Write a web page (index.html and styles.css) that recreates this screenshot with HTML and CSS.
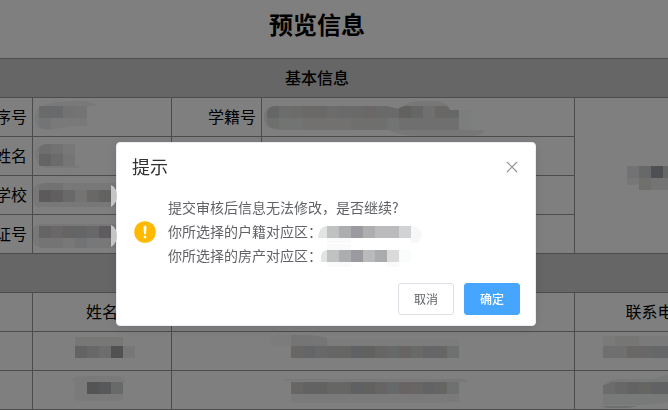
FILE: index.html
```
<!DOCTYPE html>
<html lang="zh-CN">
<head>
<meta charset="utf-8">
<title>预览信息</title>
<link rel="stylesheet" href="styles.css">
</head>
<body>
<main class="page">
  <h1 class="page-title">预览信息</h1>
  <table class="info">
    <colgroup>
      <col class="col-wide"><col class="col-wide"><col class="col-label"><col><col class="col-photo">
    </colgroup>
    <tbody>
      <tr><th class="section" colspan="5">基本信息</th></tr>
      <tr>
        <td class="label">序号</td>
        <td><svg class="mosaic" width="138" height="38" viewBox="33 98 138 38" aria-hidden="true">
          <path fill="#f2f2f2" d="M35 118q0-10 8-12q8-4 18-4q16-2 24-1q7 0 11 5h-9v20q-14-1-26 2q-16 4-22 0q-4-3-4-10z"/>
          <path fill="#d2d4d5" d="M39 106h12v12h-12z"/><path fill="#d1d5da" d="M51 106h12v12h-12z"/>
          <path fill="#e4e4e6" d="M63 106h12v12h-12z"/><path fill="#e9e8e9" d="M75 106h12v12h-12z"/>
          <path fill="#e6e8ea" d="M39 118h12v11h-6q-4 0-6-3z"/><path fill="#f3f3f3" d="M51 118h36v8q-20-1-36 3z"/>
        </svg></td>
        <td class="label">学籍号</td>
        <td><svg class="mosaic" width="312" height="38" viewBox="262 98 312 38" aria-hidden="true">
          <path fill="#efefef" d="M264 118q0-12 10-12h110l10 2h8q4-7 18-7q30-2 30 9h11v20h24q-3 6-15 6h-50q-20 0-32-6h-108q-16 0-16-12z"/>
          <path fill="#cdcdcc" d="M267 118v-6q2-6 8-6h4v12z"/><path fill="#d9dcdd" d="M279 106h12v12h-12z"/>
          <path fill="#dad9d7" d="M291 106h12v12h-12z"/><path fill="#d5d3d1" d="M303 106h24v12h-24z"/>
          <path fill="#d8d8da" d="M327 106h12v12h-12z"/><path fill="#d4d5d5" d="M339 106h24v12h-24z"/>
          <path fill="#d4cfcd" d="M363 106h12v12h-12z"/><path fill="#d4d4d4" d="M375 106h12l12 3v9h-24z"/>
          <path fill="#c6c2c1" d="M399 108l5-2h7v12h-12z"/><path fill="#cbcecc" d="M411 106h12v12h-12z"/>
          <path fill="#dededf" d="M423 106h12v12h-12z"/><path fill="#d4d1cf" d="M435 106h12v12h-12z"/>
          <path fill="#cdcfce" d="M447 106l3 4h9v8h-12z"/><path fill="#f8fcfa" d="M459 110h12v20h-12z"/>
          <path fill="#dedfdd" d="M267 118h12v11q-12 0-12-8z"/><path fill="#e4e6e7" d="M279 118h24v12h-24z"/>
          <path fill="#e5e3e0" d="M303 118h48v12h-48z"/><path fill="#dededc" d="M351 118h36v12h-36z"/>
          <path fill="#e4e9e8" d="M387 118h12v12h-12z"/><path fill="#dedfdf" d="M399 118h60v12h-60z"/>
        </svg></td>
        <td rowspan="4"><svg class="mosaic" width="120" height="155" viewBox="575 98 120 155" aria-hidden="true">
          <path fill="#e4e5e9" d="M627 166h12v12h-12z"/><path fill="#cdd2cf" d="M639 166h12v12h-12z"/>
          <path fill="#9da1a9" d="M651 166h12v12h-12z"/><path fill="#cbcdcc" d="M663 166h12v12h-12z"/>
          <path fill="#eef0ea" d="M627 178h12v6l-4 1h-8z"/><path fill="#dfe1d6" d="M639 178h12v12h-12z"/>
          <path fill="#e9e9e9" d="M651 178h24v12h-24z"/>
        </svg></td>
      </tr>
      <tr>
        <td class="label">姓名</td>
        <td><svg class="mosaic" width="138" height="38" viewBox="33 137 138 38" aria-hidden="true">
          <path fill="#f3f3f3" d="M35 155q0-10 10-11h30v20q-2 2 7 2q-4 3-16 2h-20q-11-2-11-13z"/>
          <path fill="#dcdcdd" d="M39 154v-6q3-4 8-4h4v10z"/><path fill="#e5e4e6" d="M51 144h12v10h-12z"/>
          <path fill="#f0f0f0" d="M63 144h12v10h-12z"/><path fill="#c9c9ca" d="M39 154h12v12h-12z"/>
          <path fill="#d8d7d8" d="M51 154h12v12h-12z"/><path fill="#ebebeb" d="M63 154h12v12h-12z"/>
        </svg></td>
        <td></td><td></td>
      </tr>
      <tr>
        <td class="label">学校</td>
        <td><svg class="mosaic" width="138" height="38" viewBox="33 176 138 38" aria-hidden="true">
          <path fill="#f1f1f1" d="M33 188q4-5 10-5h74v24h-78v1l-6-4z"/>
          <path fill="#e5e4e4" d="M39 186q3-3 10-3h14v7h-24z"/><path fill="#b9b4b5" d="M39 190h12v12h-12z"/>
          <path fill="#c2bebe" d="M51 190h12v12h-12z"/><path fill="#d4d3d5" d="M63 190h12v12h-12z"/>
          <path fill="#e6e7e9" d="M75 190h12v12h-12z"/><path fill="#d3d1ce" d="M87 190h12v12h-12z"/>
          <path fill="#c7c8c5" d="M99 190h12v12h-12z"/>
        </svg></td>
        <td></td><td></td>
      </tr>
      <tr>
        <td class="label">身份证号</td>
        <td><svg class="mosaic" width="138" height="38" viewBox="33 215 138 38" aria-hidden="true">
          <path fill="#f1f1f1" d="M33 228q4-4 10-4h74v24h-74q-8 0-10-6z"/>
          <path fill="#cac6c7" d="M39 226h12v12h-12z"/><path fill="#d2cfd0" d="M51 226h12v12h-12z"/>
          <path fill="#ccc8c7" d="M63 226h12v12h-12z"/><path fill="#c9cbce" d="M75 226h12v12h-12z"/>
          <path fill="#d2d1d3" d="M87 226h12v12h-12z"/><path fill="#bdb9bd" d="M99 226h12v12h-12z"/>
          <path fill="#e9e9e9" d="M39 238h24v10h-20l-4-2z"/><path fill="#e5e6e8" d="M75 238h12v10h-12z"/>
        </svg></td>
        <td></td><td></td>
      </tr>
      <tr><th class="section" colspan="5"></th></tr>
      <tr>
        <td></td><td class="head">姓名</td><td colspan="2"></td><td class="head">联系电话</td>
      </tr>
      <tr>
        <td></td>
        <td><svg class="mosaic" width="138" height="38" viewBox="33 332 138 38" aria-hidden="true">
          <path fill="#eeeeed" d="M75 337h48v9h-48z"/>
          <path fill="#c9c5c7" d="M75 346h12v12h-12z"/><path fill="#d1d0d1" d="M87 346h12v12h-12z"/>
          <path fill="#dcdbdc" d="M99 346h12v12h-12z"/><path fill="#a5a2a4" d="M111 346h12v12h-12z"/>
          <path fill="#edeef1" d="M123 346h12v12h-12z"/>
        </svg></td>
        <td colspan="2"><svg class="mosaic" width="312" height="38" viewBox="172 332 312 38" aria-hidden="true">
          <path fill="#f8f8f8" d="M271 337l6-3h30q12 6 32 5h115q5 0 5 7h-188z"/>
          <path fill="#ebebeb" d="M291 334h12l14 2l10 2v8h-36z"/>
          <path d="M277 333q14-2 31 1l-2 1h-26z" fill="#fff"/>
          <path fill="#d1cfcd" d="M291 346h12v12h-12z"/><path fill="#c8cacd" d="M303 346h12v12h-12z"/>
          <path fill="#cfd0d1" d="M315 346h12v12h-12z"/><path fill="#cdccc9" d="M327 346h24v12h-24z"/>
          <path fill="#bec4c9" d="M351 346h12v12h-12z"/><path fill="#c2c3bf" d="M363 346h12v12h-12z"/>
          <path fill="#cfccc9" d="M375 346h12v12h-12z"/><path fill="#cbd2d5" d="M387 346h12v12h-12z"/>
          <path fill="#d1c9c8" d="M399 346h12v12h-12z"/><path fill="#d3d3d1" d="M411 346h12v12h-12z"/>
          <path fill="#c8cacd" d="M423 346h12v12h-12z"/><path fill="#ccccca" d="M435 346h12v12h-12z"/>
          <path fill="#dee1e0" d="M447 346h12v12h-12z"/>
        </svg></td>
        <td><svg class="mosaic" width="120" height="38" viewBox="575 332 120 38" aria-hidden="true">
          <path fill="#f4f4f4" d="M603 336h80v10h-80z"/><path fill="#ededeb" d="M615 336h24v10h-24z"/>
          <path fill="#dededf" d="M603 346h24v12h-24z"/><path fill="#d3d1ce" d="M627 346h24v12h-24z"/>
          <path fill="#cccfd1" d="M651 346h24v12h-24z"/>
        </svg></td>
      </tr>
      <tr>
        <td></td>
        <td><svg class="mosaic" width="138" height="38" viewBox="33 371 138 38" aria-hidden="true">
          <path fill="#f5f5f5" d="M71 381q4-5 14-5h28q10 0 13 5l-3 2v17q-3 1-8 1h-38l-2-3v-17z"/>
          <path fill="#a8a8a9" d="M87 382h12v12h-12z"/><path fill="#afb1b3" d="M99 382h12v12h-12z"/>
          <path fill="#d1d4d4" d="M111 382h12v12h-12z"/>
        </svg></td>
        <td colspan="2"><svg class="mosaic" width="312" height="38" viewBox="172 371 312 38" aria-hidden="true">
          <path fill="#f2f2f2" d="M281 381q4-2 12-2h160q12-2 15 3z"/><path fill="#f4f4f4" d="M291 394h168v8h-4l-20 1h-140l-4-1z"/>
          <path fill="#cfccc9" d="M291 382h12v12h-12z"/><path fill="#c4c5c6" d="M303 382h24v12h-24z"/>
          <path fill="#cdccca" d="M327 382h24v12h-24z"/><path fill="#bcc0c9" d="M351 382h12v12h-12z"/>
          <path fill="#c3c4c0" d="M363 382h12v12h-12z"/><path fill="#ccc9c8" d="M375 382h12v12h-12z"/>
          <path fill="#ccd2d4" d="M387 382h12v12h-12z"/><path fill="#d0c9c8" d="M399 382h12v12h-12z"/>
          <path fill="#cecdcb" d="M411 382h12v12h-12z"/><path fill="#c4c6c9" d="M423 382h12v12h-12z"/>
          <path fill="#cacac9" d="M435 382h12v12h-12z"/><path fill="#dee1e0" d="M447 382h12v12h-12z"/>
        </svg></td>
        <td><svg class="mosaic" width="120" height="38" viewBox="575 371 120 38" aria-hidden="true">
          <path fill="#f1f2f2" d="M603 386q4-7 16-7h35q8-5 22-4v26q-20 5-73 4z"/>
          <path fill="#d7d8d7" d="M603 394v-9q6-1 8-3h4v12z"/><path fill="#cfcfd0" d="M615 382h12v12h-12z"/>
          <path fill="#c5c6c4" d="M627 382h12v12h-12z"/><path fill="#cbcac5" d="M639 382h12v12h-12z"/>
          <path fill="#c3c5c7" d="M651 382h24v12h-24z"/><path fill="#dbdcdc" d="M601 406h36l-8 2h-22z"/>
        </svg></td>
      </tr>
    </tbody>
  </table>
</main>

<div class="overlay">
  <section class="dialog" role="dialog" aria-modal="true" aria-labelledby="dialog-title">
    <svg class="smudge" width="7" height="64" viewBox="0 0 7 64" aria-hidden="true">
      <path fill="#c4c6c6" d="M0 0q6 3 6 11q0 7-6 11z"/><path fill="#c4c6c6" d="M0 40q6 3 6 11q0 7-6 11z"/>
    </svg>
    <header class="dialog-header">
      <h2 class="dialog-title" id="dialog-title">提示</h2>
      <button class="close" type="button" aria-label="关闭">
        <svg width="12" height="12" viewBox="0 0 12 12" aria-hidden="true"><path d="M1 1l10 10M11 1L1 11" fill="none" stroke="#909399" stroke-width="1.2"/></svg>
      </button>
    </header>
    <div class="dialog-body">
      <svg class="warning" width="24" height="24" viewBox="0 0 24 24" aria-hidden="true">
        <circle cx="12" cy="12" r="10.8" fill="#ffba00"/>
        <path fill="#fff" d="M10.500 7a1.500 1.500 0 0 1 3 0l-.5 6.500a1 1 0 0 1-2 0z"/><circle cx="12" cy="17" r="1.300" fill="#fff"/>
      </svg>
      <div class="message">
        <p>提交审核后信息无法修改，是否继续?</p>
        <p>你所选择的户籍对应区：<svg width="108" height="24" viewBox="317 219 108 24" aria-hidden="true">
          <path fill="#f7f7f7" d="M411 226q11 0 11 11q-3 1-3 10h-8z"/>
          <path fill="#fafafa" d="M327 238h24v6h-24z"/>
          <path fill="#e2e4e4" d="M318 238q1-12 9-12v12z"/><path fill="#c0c1c3" d="M327 226h12v12h-12z"/>
          <path fill="#acadaf" d="M339 226h12v12h-12z"/><path fill="#9a9aa0" d="M351 226h12v12h-12z"/>
          <path fill="#adaeb0" d="M363 226h12v12h-12z"/><path fill="#bbbbbd" d="M375 226h24v12h-24z"/>
          <path fill="#d1d2d4" d="M399 226h12v12h-12z"/>
        </svg></p>
        <p>你所选择的房产对应区：<svg width="108" height="24" viewBox="317 243 108 24" aria-hidden="true">
          <path fill="#fafafa" d="M327 244h24v6h-24zM327 262h24v7h-20l-4-3zM387 262h12v7h-12z"/>
          <path fill="#e2e4e4" d="M321 262q-1-12 6-12v12z"/><path fill="#c0c1c3" d="M327 250h12v12h-12z"/>
          <path fill="#acadaf" d="M339 250h12v12h-12z"/><path fill="#9a9aa0" d="M351 250h12v12h-12z"/>
          <path fill="#b9babc" d="M363 250h12v12h-12z"/><path fill="#a9abad" d="M375 250h12v12h-12z"/>
          <path fill="#dadadb" d="M387 250h12v12h-12z"/><path fill="#f9fcfb" d="M399 250h12v12h-12z"/>
        </svg></p>
      </div>
    </div>
    <footer class="dialog-footer">
      <button class="btn" type="button">取消</button>
      <button class="btn btn-primary" type="button">确定</button>
    </footer>
  </section>
</div>
</body>
</html>
```
FILE: styles.css
```
* { box-sizing: border-box; }

body {
  margin: 0;
  overflow: hidden;
  background: #fff;
  color: #000;
  font-family: "Noto Sans CJK SC", sans-serif;
  font-size: 16px;
}

/* The form is wider than the window and is scrolled sideways. */
.page {
  margin: 0 -73px 0 -107px;
}

.page-title {
  margin: 0;
  padding: 6px 0 16px;
  font-size: 24px;
  line-height: 36px;
  text-align: center;
}

.info {
  width: 100%;
  table-layout: fixed;
  border-collapse: collapse;
}

.col-wide { width: 139px; }
.col-label { width: 90px; }
.col-photo { width: 166px; }

.info tr { height: 39px; }

.info th,
.info td {
  padding: 0;
  border: 1px solid #999;
  line-height: 24px;
}

.info .section {
  padding-bottom: 3px;
  background: #ccc;
  font-weight: 500;
}

.info .label {
  padding: 0 5px 3px 0;
  text-align: right;
}

.info .head {
  padding-bottom: 3px;
  text-align: center;
}

.mosaic { display: block; }

.overlay {
  position: fixed;
  inset: 0;
  display: flex;
  align-items: center;
  justify-content: center;
  padding: 58px 16px 0 0;
  background: rgba(0, 0, 0, 0.5);
}

.dialog {
  position: relative;
  width: 420px;
  padding-bottom: 10px;
  border: 1px solid #ebeef5;
  border-radius: 4px;
  background: #fff;
  box-shadow: 0 2px 12px rgba(0, 0, 0, 0.1);
}

.smudge {
  position: absolute;
  left: -6px;
  top: 42px;
}

.dialog-header {
  display: flex;
  align-items: center;
  justify-content: space-between;
  padding: 14px 15px 11px;
}

.dialog-title {
  margin: 0;
  color: #303133;
  font-size: 18px;
  font-weight: 400;
  line-height: 18px;
}

.close {
  display: flex;
  padding: 2px 2px 0;
  border: 0;
  background: none;
}

.dialog-body {
  display: flex;
  align-items: center;
  gap: 11px;
  padding: 9px 15px 9px 16px;
  color: #606266;
  font-size: 14px;
  line-height: 24px;
}

.warning { flex: none; }

.message { padding-bottom: 2px; }

.message p {
  display: flex;
  margin: 0;
}

.message svg { margin-left: -5px; }

.dialog-footer {
  display: flex;
  justify-content: flex-end;
  gap: 10px;
  padding: 5px 15px 0;
}

.btn {
  padding: 7px 15px;
  border: 1px solid #dcdfe6;
  border-radius: 3px;
  background: #fff;
  color: #606266;
  font: 400 12px/16px "Noto Sans CJK SC", sans-serif;
}

.btn-primary {
  border-color: #46a6ff;
  background: #46a6ff;
  color: #fff;
  font-weight: 500;
}
```
